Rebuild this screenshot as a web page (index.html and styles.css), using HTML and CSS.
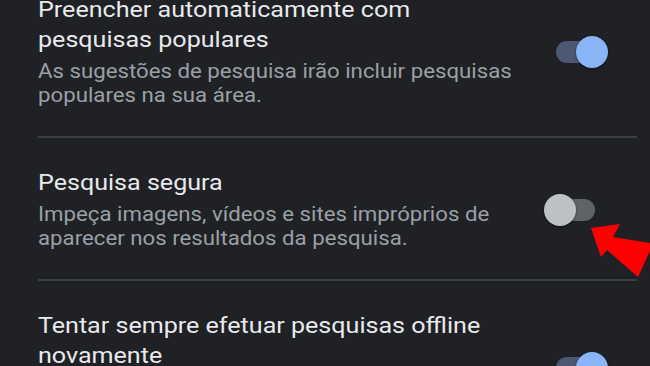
FILE: index.html
```html
<!DOCTYPE html>
<html lang="pt-BR">
<head>
  <meta charset="UTF-8">
  <title>Configurações</title>
  <link rel="stylesheet" href="styles.css">
</head>
<body>

  <div class="settings">
    <div class="pref">
      <div class="pref-text">
        <div class="pref-title">Preencher automaticamente com<br>pesquisas populares</div>
        <div class="pref-summary">As sugestões de pesquisa irão incluir pesquisas<br>populares na sua área.</div>
      </div>
      <div class="switch on"><span class="track"></span><span class="thumb"></span></div>
    </div>

    <div class="pref">
      <div class="pref-text">
        <div class="pref-title">Pesquisa segura</div>
        <div class="pref-summary">Impeça imagens, vídeos e sites impróprios de<br>aparecer nos resultados da pesquisa.</div>
      </div>
      <div class="switch"><span class="track"></span><span class="thumb"></span></div>
    </div>

    <div class="pref">
      <div class="pref-text">
        <div class="pref-title">Tentar sempre efetuar pesquisas offline<br>novamente</div>
        <div class="pref-summary">Quando você estiver on-line, as pesquisas<br>serão feitas automaticamente.</div>
      </div>
      <div class="switch on"><span class="track"></span><span class="thumb"></span></div>
    </div>
  </div>

  <svg class="arrow" width="70" height="70" viewBox="0 0 70 70">
    <polygon points="11,13 40,9 33,22 70,28 70,36 58,62 27,35 21,42" fill="#ff0000"/>
  </svg>

</body>
</html>
```

FILE: styles.css
```css
body {
    margin: 0;
    background-color: #202124;
    font-family: Roboto, 'Noto Sans', sans-serif;
    overflow: hidden;
}

.settings {
    margin-top: -35px;
    padding: 0 13px 0 38px;
}

.pref {
    display: flex;
    align-items: center;
    padding: 30px 29px 28px 0;
    border-bottom: 2px solid #3c4043;
}

/* the screenshot's text is a bit wider than plain Roboto */
.pref-text {
    flex: 1;
    transform: scaleX(1.14);
    transform-origin: left center;
}

.pref-title {
    font-size: 22px;
    line-height: 30px;
    color: #e8eaed;
}

.pref-summary {
    margin-top: 5px;
    font-size: 19.5px;
    line-height: 24px;
    color: #9aa0a6;
}

.switch {
    position: relative;
    flex: none;
    width: 64px;
    height: 32px;
}

.switch .track {
    position: absolute;
    left: 12px;
    top: 5px;
    width: 39px;
    height: 22px;
    border-radius: 11px;
    background-color: #5f6368;
}

.switch .thumb {
    position: absolute;
    left: 0;
    top: 0;
    width: 32px;
    height: 32px;
    border-radius: 50%;
    background-color: #bdc1c6;
    box-shadow: 0 1px 3px rgba(0, 0, 0, 0.4);
}

.switch.on .track {
    background-color: #4d5873;
}

.switch.on .thumb {
    left: auto;
    right: 0;
    background-color: #8ab4f8;
}

.arrow {
    position: absolute;
    left: 580px;
    top: 215px;
}
```
